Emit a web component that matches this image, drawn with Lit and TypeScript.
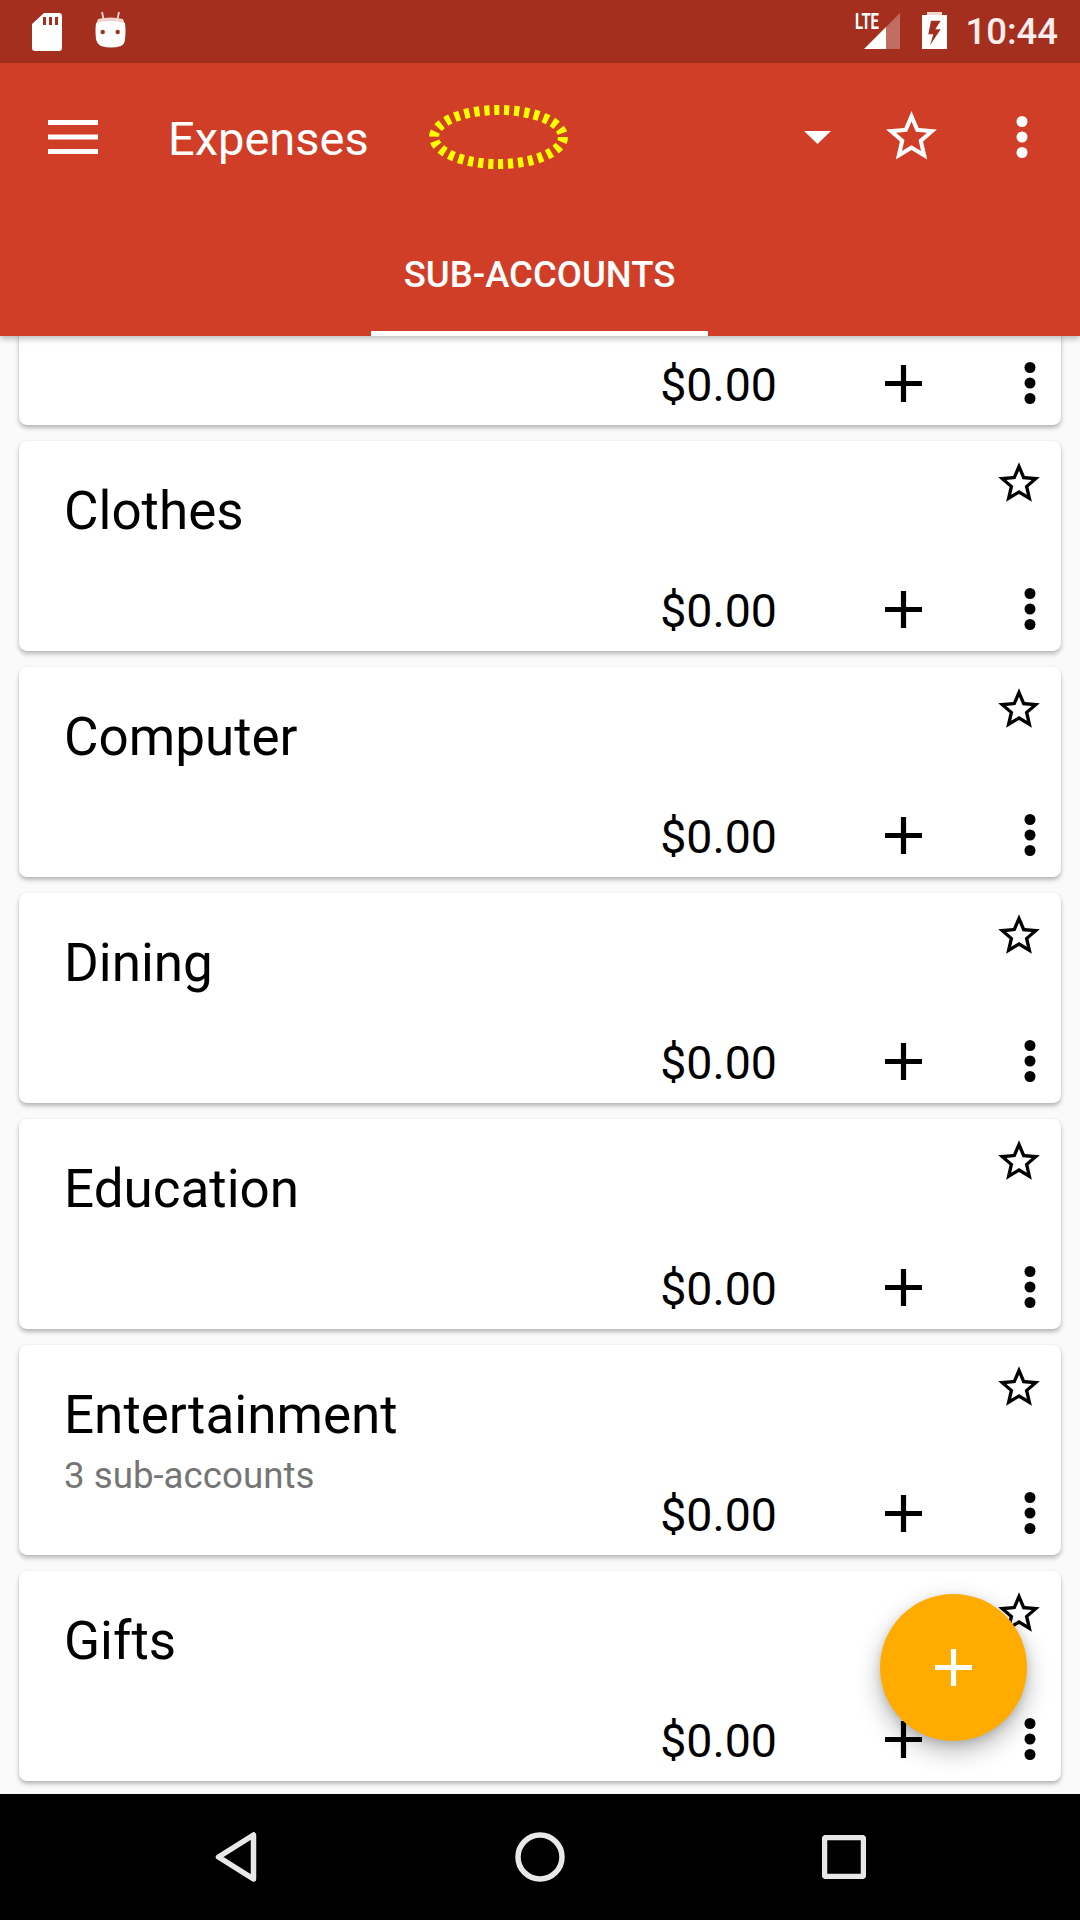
import { LitElement, html, css, svg } from 'lit';
import { customElement } from 'lit/decorators.js';

const STAR =
  'M22 9.24l-7.19-.62L12 2 9.19 8.63 2 9.24l5.46 4.73L5.82 21 12 17.27 18.18 21l-1.63-7.03L22 9.24zM12 15.4l-3.76 2.27 1-4.28-3.32-2.88 4.38-.38L12 6.1l1.71 4.04 4.38.38-3.32 2.88 1 4.28L12 15.4z';

const accounts = [
  { name: '' },
  { name: 'Clothes' },
  { name: 'Computer' },
  { name: 'Dining' },
  { name: 'Education' },
  { name: 'Entertainment', sub: '3 sub-accounts' },
  { name: 'Gifts' },
];

const starIcon = (cls: string) => html`<svg class=${cls} viewBox="0 0 24 24"><path d=${STAR}></path></svg>`;

const dotsIcon = (cls: string) => html`<svg class=${cls} viewBox="0 0 12 42">
  <circle cx="6" cy="5.5" r="5.5"></circle>
  <circle cx="6" cy="21" r="5.5"></circle>
  <circle cx="6" cy="36.5" r="5.5"></circle>
</svg>`;

const plusIcon = (cls: string) => html`<svg class=${cls} viewBox="0 0 37 37">
  <path d="M15.9 0h5.2v15.9H37v5.2H21.1V37h-5.2V21.1H0v-5.2h15.9z"></path>
</svg>`;

@customElement('app-root')
export class AppRoot extends LitElement {
  static styles = css`
    :host {
      display: flex;
      flex-direction: column;
      width: 1080px;
      height: 1920px;
      overflow: hidden;
      font-family: Roboto, 'Liberation Sans', sans-serif;
      background: #fafafa;
      color: #000;
    }
    svg {
      display: block;
      flex: none;
    }

    /* status bar */
    .status {
      flex: none;
      height: 63px;
      background: #a52f1f;
      display: flex;
      align-items: flex-start;
      color: #fff;
    }
    .sd {
      width: 30px;
      height: 38px;
      margin: 13px 0 0 32px;
    }
    .droid {
      width: 31px;
      height: 37px;
      margin: 11px 0 0 33px;
    }
    .signal {
      width: 46px;
      height: 43px;
      margin: 6px 0 0 auto;
    }
    .battery {
      width: 25px;
      height: 37px;
      margin: 12px 0 0 21px;
    }
    .clock {
      font-size: 36.5px;
      font-weight: 500;
      line-height: 42px;
      margin: 11px 22px 0 18px;
      color: #fbeeec;
    }

    /* toolbar */
    .toolbar {
      flex: none;
      height: 273px;
      background: #d13e28;
      color: #fff;
      position: relative;
      z-index: 2;
      box-shadow: 0 3px 6px rgba(0, 0, 0, 0.25);
      display: flex;
      flex-direction: column;
    }
    .actions {
      height: 147px;
      display: flex;
      align-items: center;
      padding-left: 48px;
    }
    .menu {
      width: 50px;
      height: 34px;
      fill: #fff;
    }
    .title {
      font-size: 47px;
      margin: 3px 0 0 70px;
      width: 261px;
    }
    .spinner {
      width: 139px;
      height: 64px;
      margin: 0;
    }
    .drop {
      width: 27px;
      height: 13px;
      margin: 2px 0 0 236px;
      fill: #fff;
    }
    .bar-star {
      width: 61px;
      height: 61px;
      fill: #fff;
      margin-left: 50px;
    }
    .bar-dots {
      width: 12px;
      height: 42px;
      fill: #fff;
      margin-left: 74px;
    }
    .tabs {
      flex: 1;
      display: flex;
      justify-content: center;
    }
    .tab {
      width: 337px;
      border-bottom: 5px solid #fff;
      box-sizing: border-box;
      margin-right: 1px;
      text-align: center;
      font-size: 36.5px;
      font-weight: 500;
      line-height: 129px;
      height: 126px;
    }

    /* list, scrolled so that the first card is cut off under the toolbar */
    .list {
      flex: 1;
      overflow: hidden;
      min-height: 0;
    }
    .cards {
      display: flex;
      flex-direction: column;
      gap: 16px;
      margin: -121px 19px 0;
    }
    .card {
      flex: none;
      height: 210px;
      box-sizing: border-box;
      background: #fff;
      border-radius: 8px;
      box-shadow: 0 3px 4px rgba(0, 0, 0, 0.26), 0 0 2px rgba(0, 0, 0, 0.08);
      display: flex;
      flex-direction: column;
      justify-content: space-between;
      padding: 17px 17px 27px 45px;
    }
    .top {
      display: flex;
      justify-content: space-between;
      align-items: flex-start;
    }
    .name {
      font-size: 53px;
      line-height: 56px;
      padding-top: 25px;
    }
    .sub {
      font-size: 36.7px;
      line-height: 38px;
      color: #757575;
      margin-top: 14px;
    }
    .star {
      width: 50px;
      height: 50px;
      fill: #000;
    }
    .bottom {
      display: flex;
      align-items: center;
      justify-content: flex-end;
      height: 30px;
    }
    .amount {
      font-size: 46.5px;
      line-height: 30px;
      margin-top: 3px;
    }
    .plus {
      width: 37px;
      height: 37px;
      margin-left: 108px;
      fill: #000;
    }
    .dots {
      width: 12px;
      height: 42px;
      margin: 0 8px 0 102px;
      fill: #000;
    }

    /* floating button */
    .fab {
      position: absolute;
      left: 880px;
      top: 1594px;
      z-index: 1;
      width: 147px;
      height: 147px;
      border-radius: 50%;
      background: #ffab00;
      box-shadow: 0 10px 24px rgba(0, 0, 0, 0.28), 0 3px 8px rgba(0, 0, 0, 0.12);
      display: flex;
      align-items: center;
      justify-content: center;
    }
    .fab svg {
      width: 37px;
      height: 37px;
      fill: #fff;
    }

    /* nav bar */
    .nav {
      flex: none;
      height: 126px;
      background: #000;
      position: relative;
      z-index: 2;
      display: flex;
      align-items: flex-start;
      padding: 38px 0 0 215px;
      box-sizing: border-box;
    }
    .nav svg {
      fill: none;
      stroke: #e8e8e8;
      stroke-width: 5.5;
      stroke-linejoin: round;
    }
    .back {
      width: 42px;
      height: 50px;
    }
    .home {
      width: 50px;
      height: 50px;
      margin-left: 258px;
    }
    .recent {
      width: 44px;
      height: 44px;
      margin: 3px 0 0 257px;
    }
  `;

  renderCard(a: { name: string; sub?: string }) {
    return html`<div class="card">
      <div class="top">
        <div>
          <div class="name">${a.name}</div>
          ${a.sub ? html`<div class="sub">${a.sub}</div>` : ''}
        </div>
        ${starIcon('star')}
      </div>
      <div class="bottom">
        <span class="amount">$0.00</span>
        ${plusIcon('plus')} ${dotsIcon('dots')}
      </div>
    </div>`;
  }

  render() {
    return html`
      <div class="status">
        <svg class="sd" viewBox="0 0 30 38">
          <path
            fill="#fff"
            fill-rule="evenodd"
            d="M12 0h15a3 3 0 0 1 3 3v32a3 3 0 0 1-3 3H3a3 3 0 0 1-3-3V11zM11 4v8h3V4zM17 4v8h3V4zM23 4v8h3V4z"
          ></path>
        </svg>
        <svg class="droid" viewBox="0 0 31 37">
          <path d="M7 1l1.500 7M24 1l-1.500 7" stroke="#f3d8d3" stroke-width="1.8" fill="none"></path>
          <path fill="#f0d3cd" d="M3 8q12-3 25 0l2 6H1z"></path>
          <path
            fill="#fff"
            d="M1 12q14-4 29 0q1 8 0 16q0 5-4 7q-10 3-20 0q-4-2-5-7q-1-8 0-16z"
          ></path>
          <circle cx="7.700" cy="21" r="2.200" fill="#a52f1f"></circle>
          <circle cx="22.700" cy="21" r="2.200" fill="#a52f1f"></circle>
        </svg>
        <svg class="signal" viewBox="0 0 46 43">
          <path fill="#fff" fill-opacity="0.3" d="M45 7v36H31V21z"></path>
          <path fill="#fff" d="M31 21v22H9z"></path>
          <text
            x="0"
            y="23"
            fill="#fff"
            font-family="Roboto, sans-serif"
            font-size="22"
            font-weight="700"
            textLength="24"
            lengthAdjust="spacingAndGlyphs"
          >LTE</text>
        </svg>
        <svg class="battery" viewBox="0 0 25 37">
          <path fill="#fff" fill-opacity="0.8" d="M5 0h15v3H5z"></path>
          <path
            fill="#fff"
            fill-rule="evenodd"
            d="M0 3h25v34H0zM9 8.700h9.700L13.300 17.300h5.400L8 33.300l3.300-11H6.300z"
          ></path>
        </svg>
        <span class="clock">10:44</span>
      </div>

      <div class="toolbar">
        <div class="actions">
          <svg class="menu" viewBox="0 0 50 34">
            <path d="M0 0h50v5H0zM0 14.500h50v5H0zM0 29h50v5H0z"></path>
          </svg>
          <span class="title">Expenses</span>
          <svg class="spinner" viewBox="0 0 139 64">
            ${svg`<ellipse
              cx="69.500"
              cy="32"
              rx="64.500"
              ry="27"
              fill="none"
              stroke="#ffff00"
              stroke-width="10"
              stroke-dasharray="5.200 4.800"
            ></ellipse>`}
          </svg>
          <svg class="drop" viewBox="0 0 27 13"><path d="M0 0h27L13.500 13z"></path></svg>
          ${starIcon('bar-star')} ${dotsIcon('bar-dots')}
        </div>
        <div class="tabs"><div class="tab">SUB-ACCOUNTS</div></div>
      </div>

      <div class="list">
        <div class="cards">${accounts.map((a) => this.renderCard(a))}</div>
      </div>

      <div class="fab">${plusIcon('')}</div>

      <div class="nav">
        <svg class="back" viewBox="0 0 42 50"><path d="M38.500 3v44L3.500 25z"></path></svg>
        <svg class="home" viewBox="0 0 50 50"><circle cx="25" cy="25" r="22"></circle></svg>
        <svg class="recent" viewBox="0 0 44 44"><rect x="2.500" y="2.500" width="39" height="39" rx="1.500"></rect></svg>
      </div>
    `;
  }
}
